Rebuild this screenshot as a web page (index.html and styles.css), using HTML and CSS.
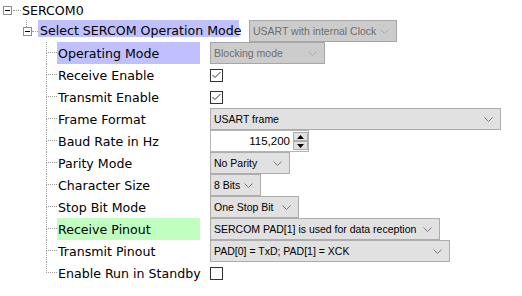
FILE: index.html
```html
<!DOCTYPE html>
<html>
<head>
<meta charset="utf-8">
<link rel="stylesheet" href="styles.css">
</head>
<body>
<div class="tree">
  <div class="row root">
    <span class="expander"></span><span class="stub stub-root"></span><span class="text">SERCOM0</span>
  </div>
  <div class="row l1">
    <span class="l1-guide"></span>
    <span class="expander"></span><span class="stub stub-l1"></span>
    <span class="label-l1 hl-blue">Select SERCOM Operation Mode</span>
    <div class="combo dis w-usart"><span class="val">USART with internal Clock</span><svg class="chev" width="9" height="5" viewBox="0 0 9 5"><polyline points="0.5,0.5 4.5,4.5 8.5,0.5" fill="none" stroke="#a8a8a8"/></svg></div>
  </div>
  <div class="l2">
    <div class="row">
      <span class="guide"><span class="up"></span><span class="down"></span></span>
      <span class="label hl-blue">Operating Mode</span>
      <div class="combo dis w-block"><span class="val">Blocking mode</span><svg class="chev" width="9" height="5" viewBox="0 0 9 5"><polyline points="0.5,0.5 4.5,4.5 8.5,0.5" fill="none" stroke="#a8a8a8"/></svg></div>
    </div>
    <div class="row">
      <span class="guide"><span class="up"></span><span class="down"></span></span>
      <span class="label">Receive Enable</span>
      <span class="check"><svg width="11" height="11" viewBox="0 0 11 11"><polyline points="1.5,5 4,7.5 9.5,2" fill="none" stroke="#333" stroke-width="1"/></svg></span>
    </div>
    <div class="row">
      <span class="guide"><span class="up"></span><span class="down"></span></span>
      <span class="label">Transmit Enable</span>
      <span class="check"><svg width="11" height="11" viewBox="0 0 11 11"><polyline points="1.5,5 4,7.5 9.5,2" fill="none" stroke="#333" stroke-width="1"/></svg></span>
    </div>
    <div class="row">
      <span class="guide"><span class="up"></span><span class="down"></span></span>
      <span class="label">Frame Format</span>
      <div class="combo w-frame"><span class="val">USART frame</span><svg class="chev" width="9" height="5" viewBox="0 0 9 5"><polyline points="0.5,0.5 4.5,4.5 8.5,0.5" fill="none" stroke="#7a7a7a"/></svg></div>
    </div>
    <div class="row">
      <span class="guide"><span class="up"></span><span class="down"></span></span>
      <span class="label">Baud Rate in Hz</span>
      <div class="spin">
        <span class="spin-val">115,200</span>
        <span class="spin-btns">
          <span class="sbtn"><svg width="7" height="4" viewBox="0 0 7 4"><polygon points="3.5,0 7,4 0,4" fill="#000"/></svg></span>
          <span class="sbtn"><svg width="7" height="4" viewBox="0 0 7 4"><polygon points="0,0 7,0 3.5,4" fill="#000"/></svg></span>
        </span>
      </div>
    </div>
    <div class="row">
      <span class="guide"><span class="up"></span><span class="down"></span></span>
      <span class="label">Parity Mode</span>
      <div class="combo w-parity"><span class="val">No Parity</span><svg class="chev" width="9" height="5" viewBox="0 0 9 5"><polyline points="0.5,0.5 4.5,4.5 8.5,0.5" fill="none" stroke="#7a7a7a"/></svg></div>
    </div>
    <div class="row">
      <span class="guide"><span class="up"></span><span class="down"></span></span>
      <span class="label">Character Size</span>
      <div class="combo w-bits"><span class="val">8 Bits</span><svg class="chev" width="9" height="5" viewBox="0 0 9 5"><polyline points="0.5,0.5 4.5,4.5 8.5,0.5" fill="none" stroke="#7a7a7a"/></svg></div>
    </div>
    <div class="row">
      <span class="guide"><span class="up"></span><span class="down"></span></span>
      <span class="label">Stop Bit Mode</span>
      <div class="combo w-stop"><span class="val">One Stop Bit</span><svg class="chev" width="9" height="5" viewBox="0 0 9 5"><polyline points="0.5,0.5 4.5,4.5 8.5,0.5" fill="none" stroke="#7a7a7a"/></svg></div>
    </div>
    <div class="row">
      <span class="guide"><span class="up"></span><span class="down"></span></span>
      <span class="label hl-green">Receive Pinout</span>
      <div class="combo w-rx"><span class="val">SERCOM PAD[1] is used for data reception</span><svg class="chev" width="9" height="5" viewBox="0 0 9 5"><polyline points="0.5,0.5 4.5,4.5 8.5,0.5" fill="none" stroke="#7a7a7a"/></svg></div>
    </div>
    <div class="row">
      <span class="guide"><span class="up"></span><span class="down"></span></span>
      <span class="label">Transmit Pinout</span>
      <div class="combo w-tx"><span class="val">PAD[0] = TxD; PAD[1] = XCK</span><svg class="chev" width="9" height="5" viewBox="0 0 9 5"><polyline points="0.5,0.5 4.5,4.5 8.5,0.5" fill="none" stroke="#7a7a7a"/></svg></div>
    </div>
    <div class="row last">
      <span class="guide"><span class="up"></span><span class="down"></span></span>
      <span class="label">Enable Run in Standby</span>
      <span class="check"></span>
    </div>
  </div>
</div>
</body>
</html>
```
FILE: styles.css
```css
html, body {
  margin: 0;
  padding: 0;
  background: #ffffff;
}
body {
  font-family: "DejaVu Sans", sans-serif;
  font-size: 12.6px;
  color: #000000;
}
.tree {
  display: flex;
  flex-direction: column;
}
.row {
  display: flex;
  align-items: center;
  height: 22px;
}
.row.root {
  height: 20px;
  padding-left: 3px;
}
.expander {
  box-sizing: border-box;
  width: 9px;
  height: 9px;
  border: 1px solid #8e8e8e;
  background: #ffffff;
  display: flex;
  align-items: center;
  justify-content: center;
  flex: none;
}
.expander::after {
  content: "";
  width: 5px;
  height: 1px;
  background: #000000;
}
.stub {
  height: 0;
  border-top: 1px dotted #9a9a9a;
  flex: none;
}
.stub-root {
  width: 8px;
  margin-left: 1px;
}
.root .text {
  margin-left: 1px;
}
.row.l1 {
  padding-left: 26px;
  align-items: flex-start;
}
.l1-guide {
  width: 0;
  height: 7px;
  border-left: 1px dotted #9a9a9a;
  margin-right: -4px;
  flex: none;
}
.row.l1 .expander {
  margin-top: 7px;
}
.stub-l1 {
  width: 6px;
  margin-top: 11px;
}
.label-l1 {
  box-sizing: border-box;
  width: 201px;
  height: 17px;
  padding: 5px 0 0 2px;
  line-height: 12px;
  white-space: nowrap;
  flex: none;
}
.hl-blue {
  background: #c0c0ff;
}
.hl-green {
  background: #c0ffc0;
}
.combo {
  box-sizing: border-box;
  height: 22px;
  display: flex;
  align-items: center;
  border: 1px solid #adadad;
  background: #e1e1e1;
  font-family: "Liberation Sans", Arial, sans-serif;
  font-size: 10.5px;
  color: #000000;
  padding-left: 3px;
  flex: none;
}
.row.l1 .combo {
  margin-left: 10px;
}
.combo .val {
  flex: 1;
  white-space: nowrap;
  overflow: hidden;
}
.combo .chev {
  flex: none;
  margin: 0 7px 0 3px;
}
.combo.dis {
  background: #cccccc;
  border-color: #a6a6a6;
  color: #6d6d6d;
}
.w-usart { width: 148px; }
.w-block { width: 115px; }
.w-frame { width: 291px; }
.w-parity { width: 80px; }
.w-bits { width: 51px; }
.w-stop { width: 89px; }
.w-rx { width: 230px; }
.w-tx { width: 240px; }

.l2 {
  display: flex;
  flex-direction: column;
}
.l2 .row {
  padding-left: 46px;
}
.guide {
  align-self: stretch;
  width: 11px;
  display: grid;
  grid-template-rows: 11px 11px;
  flex: none;
}
.guide .up {
  border-left: 1px dotted #9a9a9a;
  border-bottom: 1px dotted #9a9a9a;
  box-sizing: border-box;
}
.guide .down {
  border-left: 1px dotted #9a9a9a;
}
.row.last .guide .down {
  border-left: none;
}
.label {
  box-sizing: border-box;
  align-self: stretch;
  width: 143px;
  margin-right: 10px;
  padding-left: 1px;
  display: flex;
  align-items: center;
  white-space: nowrap;
  flex: none;
}
.check {
  box-sizing: border-box;
  width: 13px;
  height: 13px;
  border: 1px solid #333333;
  background: #ffffff;
  display: flex;
  flex: none;
}
.spin {
  box-sizing: border-box;
  width: 99px;
  height: 22px;
  border: 1px solid #b4b4b4;
  background: #ffffff;
  display: flex;
  align-items: stretch;
  font-family: "Liberation Sans", Arial, sans-serif;
  font-size: 11.5px;
  flex: none;
}
.spin-val {
  flex: 1;
  padding-right: 3px;
  display: flex;
  align-items: center;
  justify-content: flex-end;
}
.spin-btns {
  display: flex;
  flex-direction: column;
  width: 15px;
  padding: 1px 0;
  box-sizing: border-box;
}
.sbtn {
  flex: 1;
  box-sizing: border-box;
  border: 1px solid #adadad;
  background: #e1e1e1;
  display: flex;
  align-items: center;
  justify-content: center;
}
```
